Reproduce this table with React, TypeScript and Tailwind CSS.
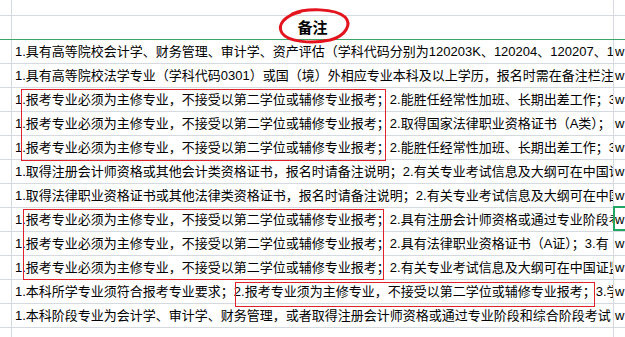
import React from 'react';

const rows: { text: string; active?: boolean }[] = [
  { text: '1.具有高等院校会计学、财务管理、审计学、资产评估（学科代码分别为120203K、120204、120207、120208）专业' },
  { text: '1.具有高等院校法学专业（学科代码0301）或国（境）外相应专业本科及以上学历，报名时需在备注栏注明' },
  { text: '1.报考专业必须为主修专业，不接受以第二学位或辅修专业报考；2.能胜任经常性加班、长期出差工作；3.' },
  { text: '1.报考专业必须为主修专业，不接受以第二学位或辅修专业报考；2.取得国家法律职业资格证书（A类）；' },
  { text: '1.报考专业必须为主修专业，不接受以第二学位或辅修专业报考；2.能胜任经常性加班、长期出差工作；3.' },
  { text: '1.取得注册会计师资格或其他会计类资格证书，报名时请备注说明；2.有关专业考试信息及大纲可在中国证监会' },
  { text: '1.取得法律职业资格证书或其他法律类资格证书，报名时请备注说明；2.有关专业考试信息及大纲可在中国证监会' },
  { text: '1.报考专业必须为主修专业，不接受以第二学位或辅修专业报考；2.具有注册会计师资格或通过专业阶段考试' },
  { text: '1.报考专业必须为主修专业，不接受以第二学位或辅修专业报考；2.具有法律职业资格证书（A证）；3.有' },
  { text: '1.报考专业必须为主修专业，不接受以第二学位或辅修专业报考；2.有关专业考试信息及大纲可在中国证监会' },
  { text: '1.本科所学专业须符合报考专业要求；2.报考专业须为主修专业，不接受以第二学位或辅修专业报考；3.学历' },
  { text: '1.本科阶段专业为会计学、审计学、财务管理，或者取得注册会计师资格或通过专业阶段和综合阶段考试' },
];

const Row = ({ text, right, className = '' }: { text?: React.ReactNode; right?: string; className?: string }) => (
  <div className={`flex h-[24px] border-b border-[#d4d9e2] ${className}`}>
    <div className="w-[12px] shrink-0 border-r border-[#d4d9e2]" />
    <div className="w-[602px] shrink-0 border-r border-[#d4d9e2] overflow-hidden whitespace-nowrap pl-[3px] flex items-center leading-none">
      {text}
    </div>
    <div className="flex-1 pl-[1px] flex items-center leading-none">{right}</div>
  </div>
);

export default function App() {
  return (
    <div
      className="relative w-[625px] h-[337px] overflow-hidden bg-white text-[13px] text-black"
      style={{ fontFamily: '"Liberation Sans", "Noto Sans CJK SC", sans-serif' }}
    >
      <div className="flex h-[16px] border-b border-[#d4d9e2]">
        <div className="w-[12px] shrink-0 border-r border-[#d4d9e2]" />
        <div className="w-[602px] shrink-0 border-r border-[#d4d9e2]" />
        <div className="flex-1" />
      </div>
      <div className="flex h-[24px] border-b border-[#3fa469]">
        <div className="w-[12px] shrink-0 border-r border-[#d4d9e2]" />
        <div className="w-[602px] shrink-0 border-r border-[#d4d9e2] flex items-center justify-center text-[15px] font-bold leading-none">
          备注
        </div>
        <div className="flex-1" />
      </div>
      {rows.map((r, i) => (
        <Row key={i} text={r.text} right="w" />
      ))}
      <Row />

      {/* annotations */}
      <svg className="absolute left-0 top-0" width="625" height="337">
        <path
          d="M292 14 C305 8 335 8 345 17 C352 24 346 36 330 40 C312 44 288 42 282 33 C277 25 284 16 300 12"
          fill="none"
          stroke="#e3141d"
          strokeWidth="3"
          strokeLinecap="round"
        />
      </svg>
      <div className="absolute left-[21px] top-[89px] w-[365px] h-[72px] border border-[#e0202a]" />
      <div className="absolute left-[23px] top-[209px] w-[361px] h-[71px] border border-[#e0202a]" />
      <div className="absolute left-[235px] top-[282px] w-[360px] h-[25px] border border-[#e0202a]" />
      <div className="absolute left-[613px] top-[206px] w-[20px] h-[25px] border-2 border-[#22a565]" />
    </div>
  );
}
